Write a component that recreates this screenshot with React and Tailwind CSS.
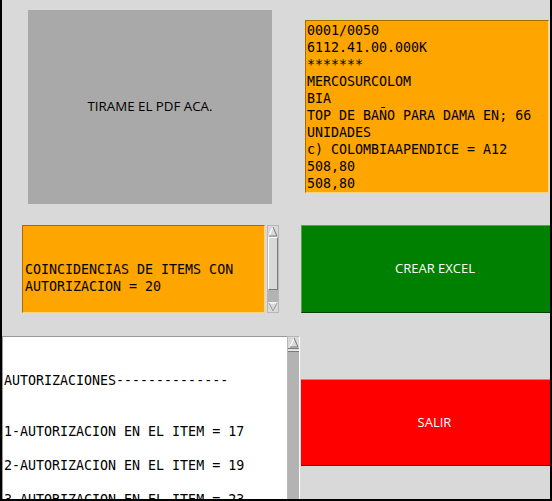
import React from "react";

const mono = { fontFamily: '"DejaVu Sans Mono", "Liberation Mono", monospace' };

function UpArrow() {
  return (
    <svg width="10" height="11" viewBox="0 0 10 11" className="block">
      <polygon points="5,1 9,10 1,10" fill="#d9d9d9" />
      <polyline points="1,10 5,1" fill="none" stroke="#ffffff" strokeWidth="1.2" />
      <polyline points="5,1 9,10 1,10" fill="none" stroke="#7a7a7a" strokeWidth="1" />
    </svg>
  );
}

function DownArrow() {
  return (
    <svg width="10" height="10" viewBox="0 0 10 10" className="block">
      <polygon points="1,1 9,1 5,9" fill="#d9d9d9" />
      <polyline points="1,1 9,1" fill="none" stroke="#ffffff" strokeWidth="1.2" />
      <polyline points="1,1 5,9 9,1" fill="none" stroke="#9a9a9a" strokeWidth="1" />
    </svg>
  );
}

function ScrollSmall() {
  return (
    <div className="ml-[2px] w-[12px] h-[88px] flex flex-col border border-[#b8b8b8] bg-[#d9d9d9]">
      <div className="h-[11px] flex items-center justify-center">
        <UpArrow />
      </div>
      <div className="h-[53px] bg-[#d9d9d9] border border-t-[#ffffff] border-l-[#ffffff] border-b-[#7a7a7a] border-r-[#7a7a7a]"></div>
      <div className="flex-1 bg-[#b3b3b3]"></div>
      <div className="h-[10px] flex items-center justify-center bg-[#d9d9d9]">
        <DownArrow />
      </div>
    </div>
  );
}

function ScrollBig() {
  return (
    <div className="w-[13px] h-[163px] flex flex-col border-l border-t border-[#b8b8b8] border-r border-r-[#ffffff] bg-[#b3b3b3]">
      <div className="h-[11px] flex items-center justify-center bg-[#d9d9d9]">
        <UpArrow />
      </div>
      <div className="h-[4px] bg-[#e4e4e4] border-t border-b border-[#7a7a7a]"></div>
      <div className="flex-1 bg-[#b3b3b3]"></div>
    </div>
  );
}

export default function App() {
  const info = [
    "0001/0050",
    "6112.41.00.000K",
    "*******",
    "MERCOSURCOLOM",
    "BIA",
    "TOP DE BAÑO PARA DAMA EN; 66",
    "UNIDADES",
    "c) COLOMBIAAPENDICE = A12",
    "508,80",
    "508,80",
  ];
  const autos = [
    "",
    "",
    "AUTORIZACIONES--------------",
    "",
    "",
    "1-AUTORIZACION EN EL ITEM = 17",
    "",
    "2-AUTORIZACION EN EL ITEM = 19",
    "",
    "3-AUTORIZACION EN EL ITEM = 23",
  ];
  return (
    <div
      className="w-[552px] h-[501px] bg-[#d9d9d9] border-l-2 border-r-2 border-b-2 border-black overflow-hidden flex flex-col"
      style={{ fontFamily: '"Open Sans", "Noto Sans", sans-serif' }}
    >
      {/* Row 1 */}
      <div className="flex pt-[10px] h-[204px] shrink-0">
        <div className="ml-[26px] w-[244px] h-[194px] bg-[#a9a9a9] flex items-center justify-center text-[13.3px] text-black">
          TIRAME EL PDF ACA.
        </div>
        <div
          className="ml-[33px] mt-[10px] w-[244px] h-[173px] bg-[#ffa500] border border-t-[#a86d00] border-l-[#a86d00] border-b-[#ffd27a] border-r-[#ffd27a] pl-[1px] pt-[1px] text-[13.3px] leading-[17px] text-black overflow-hidden whitespace-pre"
          style={mono}
        >
          {info.map((l, i) => (
            <div key={i} className="h-[17px]">{l}</div>
          ))}
        </div>
      </div>

      {/* Row 2 */}
      <div className="flex mt-[21px] h-[88px] shrink-0">
        <div
          className="ml-[20px] w-[243px] h-[88px] bg-[#ffa500] border border-t-[#a86d00] border-l-[#a86d00] border-b-[#ffd27a] border-r-[#ffd27a] pl-[2px] pt-[35px] text-[13.3px] leading-[17px] text-black overflow-hidden whitespace-pre"
          style={mono}
        >
          <div className="h-[17px]">COINCIDENCIAS DE ITEMS CON</div>
          <div className="h-[17px]">AUTORIZACION = 20</div>
        </div>
        <ScrollSmall />
        <div className="ml-[22px] flex-1 h-[88px] bg-[#008000] border-t border-l border-b border-t-[#4da64d] border-l-[#4da64d] border-b-[#004000] flex items-center justify-center pl-[18px] text-[13px] text-white">
          CREAR EXCEL
        </div>
      </div>

      {/* Row 3 */}
      <div className="flex mt-[23px] h-[163px] shrink-0">
        <div
          className="w-[285px] h-[163px] bg-white border-l border-t border-[#9a9a9a] pl-[1px] pt-[1px] text-[13.3px] leading-[17px] text-black overflow-hidden whitespace-pre"
          style={mono}
        >
          {autos.map((l, i) => (
            <div key={i} className="h-[17px]">{l}</div>
          ))}
        </div>
        <ScrollBig />
        <div className="ml-[1px] mt-[43px] flex-1 h-[87px] bg-[#ff0000] border-t border-b border-t-[#ff6b6b] border-b-[#8b0000] flex items-center justify-center pl-[18px] text-[13px] text-white">
          SALIR
        </div>
      </div>
    </div>
  );
}
